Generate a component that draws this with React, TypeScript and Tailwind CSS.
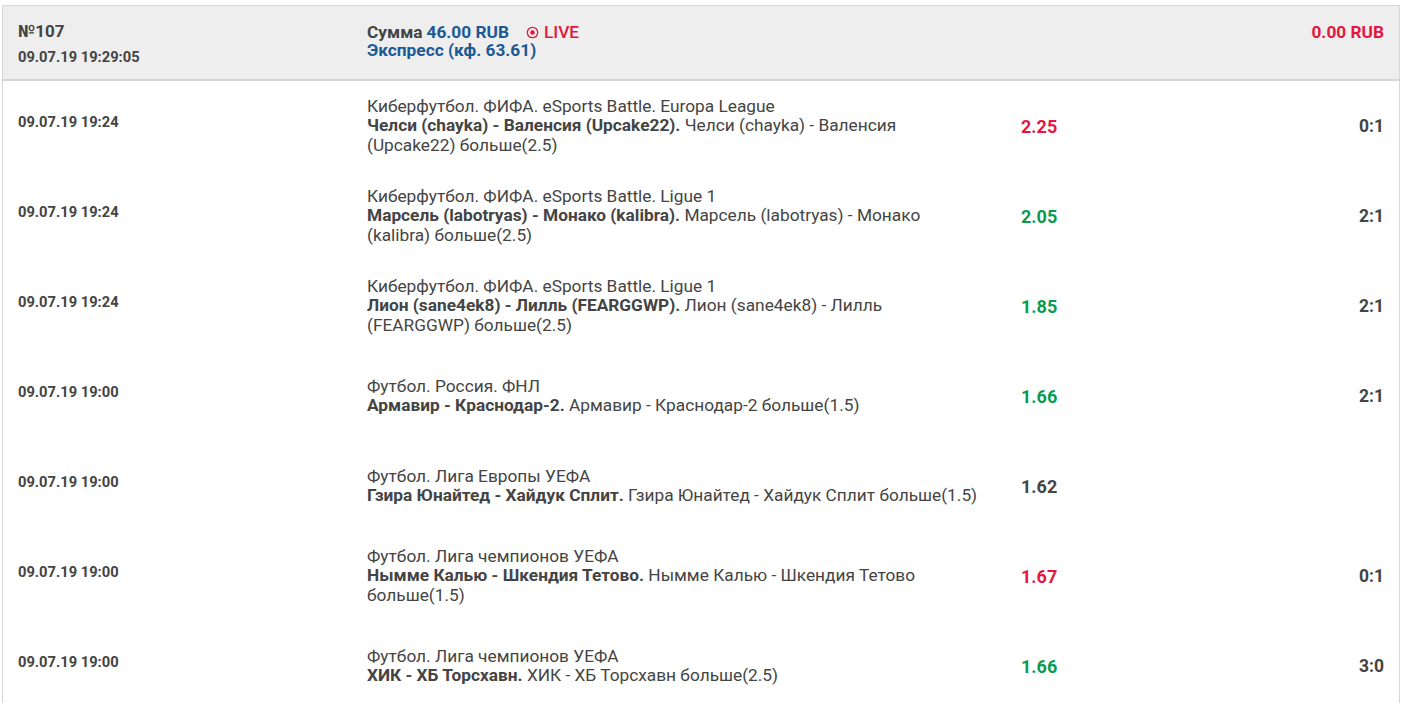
import { useState } from "react";

type Leg = {
  date: string;
  league: string;
  match: string;
  pick: string;
  odd: string;
  tone: "red" | "green" | "plain";
  score: string;
};

const legs: Leg[] = [
  {
    date: "09.07.19 19:24",
    league: "Киберфутбол. ФИФА. eSports Battle. Europa League",
    match: "Челси (chayka) - Валенсия (Upcake22).",
    pick: "Челси (chayka) - Валенсия (Upcake22) больше(2.5)",
    odd: "2.25",
    tone: "red",
    score: "0:1",
  },
  {
    date: "09.07.19 19:24",
    league: "Киберфутбол. ФИФА. eSports Battle. Ligue 1",
    match: "Марсель (labotryas) - Монако (kalibra).",
    pick: "Марсель (labotryas) - Монако (kalibra) больше(2.5)",
    odd: "2.05",
    tone: "green",
    score: "2:1",
  },
  {
    date: "09.07.19 19:24",
    league: "Киберфутбол. ФИФА. eSports Battle. Ligue 1",
    match: "Лион (sane4ek8) - Лилль (FEARGGWP).",
    pick: "Лион (sane4ek8) - Лилль (FEARGGWP) больше(2.5)",
    odd: "1.85",
    tone: "green",
    score: "2:1",
  },
  {
    date: "09.07.19 19:00",
    league: "Футбол. Россия. ФНЛ",
    match: "Армавир - Краснодар-2.",
    pick: "Армавир - Краснодар-2 больше(1.5)",
    odd: "1.66",
    tone: "green",
    score: "2:1",
  },
  {
    date: "09.07.19 19:00",
    league: "Футбол. Лига Европы УЕФА",
    match: "Гзира Юнайтед - Хайдук Сплит.",
    pick: "Гзира Юнайтед - Хайдук Сплит больше(1.5)",
    odd: "1.62",
    tone: "plain",
    score: "",
  },
  {
    date: "09.07.19 19:00",
    league: "Футбол. Лига чемпионов УЕФА",
    match: "Нымме Калью - Шкендия Тетово.",
    pick: "Нымме Калью - Шкендия Тетово больше(1.5)",
    odd: "1.67",
    tone: "red",
    score: "0:1",
  },
  {
    date: "09.07.19 19:00",
    league: "Футбол. Лига чемпионов УЕФА",
    match: "ХИК - ХБ Торсхавн.",
    pick: "ХИК - ХБ Торсхавн больше(2.5)",
    odd: "1.66",
    tone: "green",
    score: "3:0",
  },
];

const toneClass = {
  red: "text-[#e3173e]",
  green: "text-[#0b9a50]",
  plain: "text-[#444]",
};

function LiveMark() {
  return (
    <span className="ml-[17px] inline-flex items-center gap-[5px] text-[#e3173e]">
      <svg width="13" height="13" viewBox="0 0 14 14" className="mt-px">
        <circle cx="7" cy="7" r="5.6" fill="none" stroke="currentColor" strokeWidth="1.4" />
        <circle cx="7" cy="7" r="2.4" fill="currentColor" />
      </svg>
      <span className="font-medium">LIVE</span>
    </span>
  );
}

export default function App() {
  const [rows] = useState(legs);

  return (
    <div className="min-h-[703px] bg-white font-[Roboto,sans-serif] text-[#444]">
      <div className="ml-[2px] mt-[5px] w-[1398px] border border-[#d4d6d9]">
        <div className="grid h-[75px] grid-cols-[349px_1fr_auto] border-b-2 border-[#d4d6d9] bg-[#eeeeee] px-[15px] pt-[14px]">
          <div className="flex flex-col">
            <span className="text-[17px] font-bold leading-[22px]">№107</span>
            <span className="mt-[6px] text-[14.7px] font-bold leading-[18px]">09.07.19 19:29:05</span>
          </div>
          <div className="flex flex-col pt-[3px] text-[17.3px] font-bold leading-[18px]">
            <span className="flex items-center">
              <span>Сумма</span>
              <span className="ml-1 text-[#1c5a96]">46.00 RUB</span>
              <LiveMark />
            </span>
            <span className="text-[#1c5a96]">Экспресс (кф. 63.61)</span>
          </div>
          <div className="pt-[3px] text-right text-[17.3px] font-bold leading-[18px] text-[#e3173e]">
            0.00 RUB
          </div>
        </div>

        {rows.map((leg, i) => (
          <div
            key={i}
            className="grid h-[90px] grid-cols-[349px_654px_1fr_auto] items-center px-[15px]"
          >
            <span className="pb-[8px] text-[14.7px] font-bold">{leg.date}</span>
            <div className="pr-[38px] text-[17.3px] leading-[19.5px]">
              <div>{leg.league}</div>
              <div>
                <span className="font-bold">{leg.match}</span> {leg.pick}
              </div>
            </div>
            <span className={`text-[18px] font-bold ${toneClass[leg.tone]}`}>{leg.odd}</span>
            <span className="text-right text-[17.5px] font-bold">{leg.score}</span>
          </div>
        ))}
      </div>
    </div>
  );
}
